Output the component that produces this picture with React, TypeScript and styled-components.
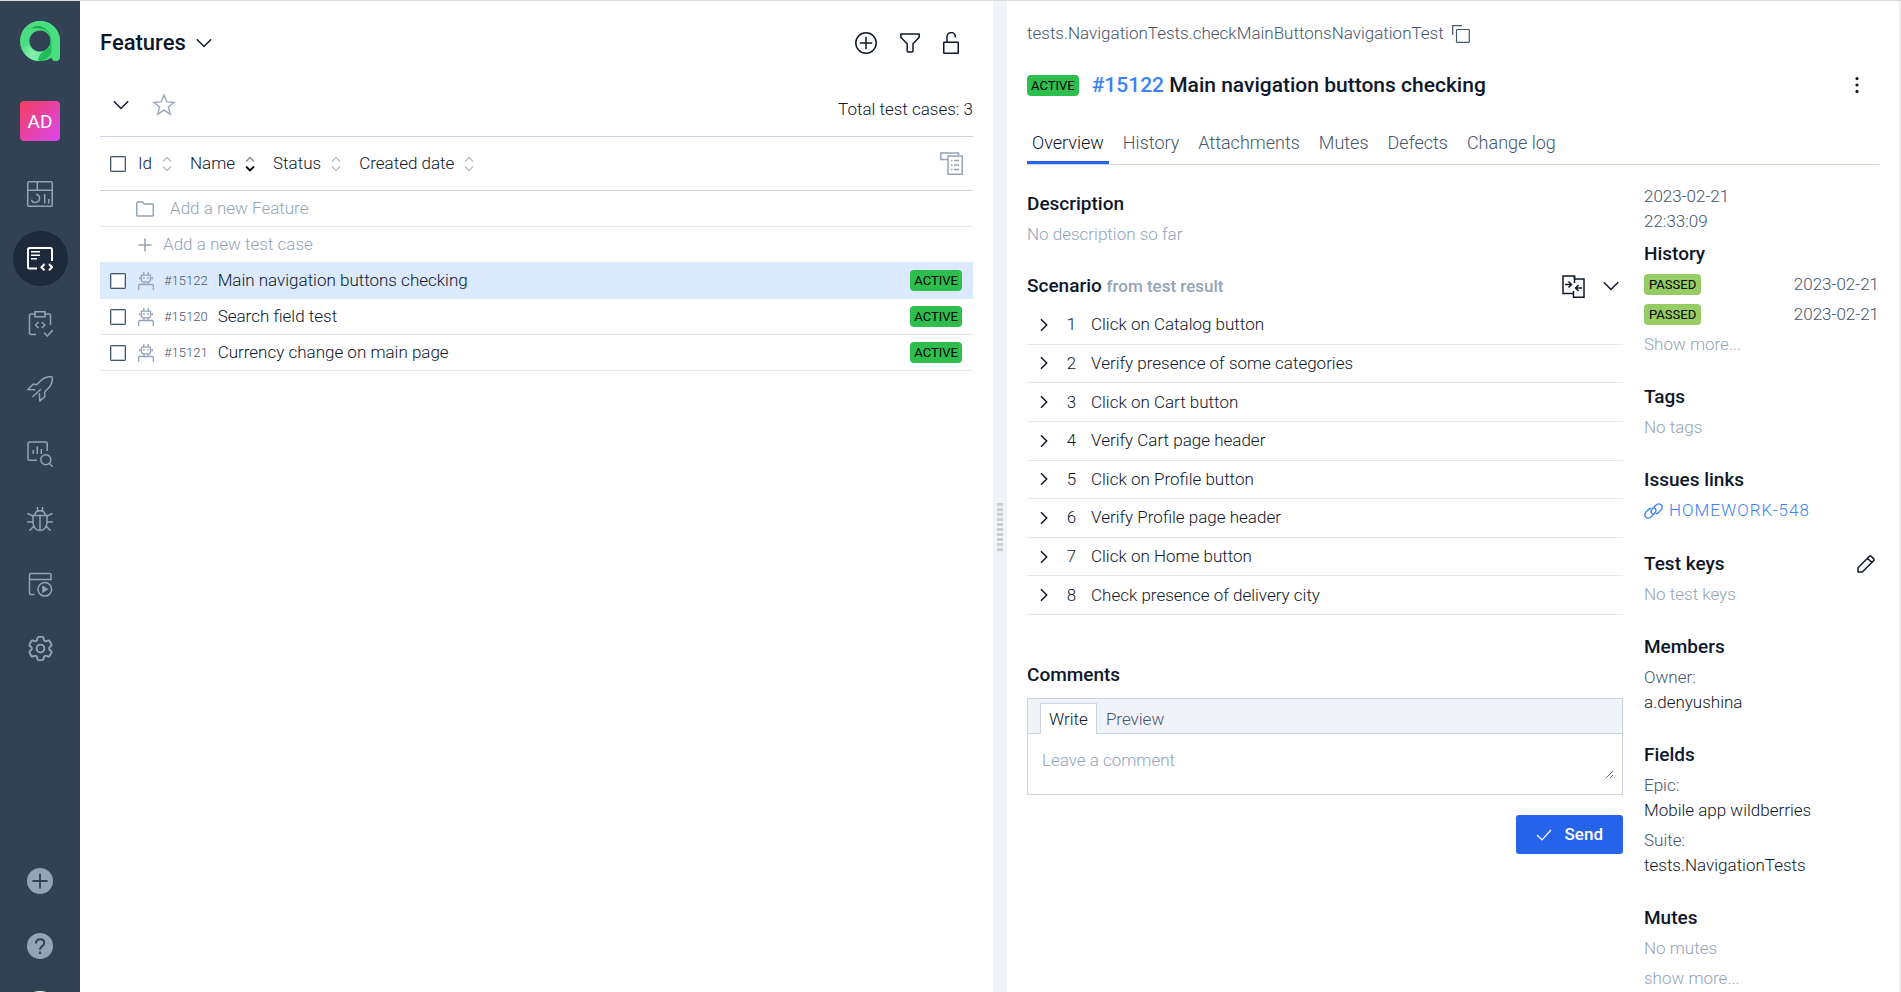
import React from "react";
import styled, { createGlobalStyle, css } from "styled-components";
import { HiOutlineCog6Tooth } from "react-icons/hi2";

const c = {
  ink: "#0f172a",
  text: "#1e293b",
  soft: "#475569",
  mute: "#94a3b8",
  line: "#cbd5e1",
  lineSoft: "#e2e8f0",
  blue: "#2563eb",
  link: "#3b82f6",
  panel: "#f0f4f9",
  picked: "#dbeafe",
};

const GlobalStyle = createGlobalStyle`
  *, *::before, *::after { box-sizing: border-box; }
  body {
    margin: 0;
    font: 300 17px/25px Roboto, "Liberation Sans", sans-serif;
    color: ${c.ink};
    background: #fff;
  }
  h1, h2, h3, p, ul, ol, dl, dd { margin: 0; padding: 0; }
  ul, ol { list-style: none; }
  button, input, textarea { font: inherit; color: inherit; }
  a { text-decoration: none; }
  svg { display: block; flex: none; }
`;

/* ---------- shell ---------- */

const Shell = styled.div`
  display: grid;
  grid-template-columns: 80px minmax(0, 913fr) 14px minmax(0, 894fr);
  height: 100vh;
  overflow: hidden;
  border-top: 1px solid #dcdcdc;
`;

const Sidebar = styled.aside`
  display: flex;
  flex-direction: column;
  align-items: center;
  min-height: 0;
  padding-top: 20px;
  background: #334155;
`;

const Avatar = styled.div`
  display: grid;
  place-items: center;
  width: 40px;
  height: 40px;
  margin: 40px 0 25px;
  border-radius: 4px;
  background: linear-gradient(135deg, #f43f5e, #d946ef);
  color: #fff;
  font-size: 19px;
  font-weight: 400;
`;

const NavList = styled.nav`
  display: flex;
  flex-direction: column;
  gap: 10px;
`;

const NavLink = styled.a<{ $active?: boolean }>`
  display: grid;
  flex: none;
  place-items: center;
  width: 55px;
  height: 55px;
  border-radius: 50%;
  color: ${(p) => (p.$active ? "#fff" : c.mute)};
  background: ${(p) => (p.$active ? "#1e293b" : "transparent")};
`;

const NavFooter = styled(NavList)`
  height: 139px;
  margin-top: auto;
  overflow: hidden;
`;

const UserDot = styled.span`
  width: 40px;
  height: 40px;
  border-radius: 50%;
  background: #fff;
`;

const Splitter = styled.div`
  display: grid;
  place-items: center;
  padding-top: 61px;
  background: ${c.panel};
`;

const Grip = styled.span`
  width: 6px;
  height: 48px;
  background: repeating-linear-gradient(#cfcfcf 0 3px, transparent 3px 5px);
`;

/* ---------- shared parts ---------- */

const IconButton = styled.button<{ $tone?: string }>`
  display: grid;
  place-items: center;
  padding: 0;
  border: 0;
  background: none;
  color: ${(p) => p.$tone ?? c.ink};
  cursor: pointer;
`;

const Badge = styled.span<{ $passed?: boolean }>`
  flex: none;
  height: 21px;
  padding: 0 ${(p) => (p.$passed ? 5 : 4)}px;
  border-radius: 4px;
  background: ${(p) => (p.$passed ? "#97cc64" : "#2dbe4e")};
  color: #000;
  font-size: 13px;
  font-weight: 400;
  line-height: 22px;
`;

const Checkbox = styled.input.attrs({ type: "checkbox" })`
  appearance: none;
  flex: none;
  width: 16px;
  height: 16px;
  margin: 0;
  border: 1px solid ${c.soft};
  outline: 1px solid #64748b66;
  outline-offset: -2px;
  border-radius: 1px;
  background: #fff;
`;

const Heading = styled.h2`
  font-size: 19px;
  font-weight: 500;
  line-height: 30px;
`;

const MutedText = styled.p`
  color: ${c.mute};
  line-height: 30px;
`;

/* ---------- test case list ---------- */

const ListPanel = styled.main`
  min-width: 0;
  padding: 0 20px;
`;

const ListHeader = styled.header`
  display: flex;
  align-items: center;
  justify-content: space-between;
  height: 83px;
`;

const TreePicker = styled.button`
  display: flex;
  align-items: center;
  gap: 10px;
  padding: 0;
  border: 0;
  background: none;
  color: ${c.ink};
  font-size: 22px;
  font-weight: 500;
`;

const Actions = styled.div<{ $gap: number; $right?: number }>`
  display: flex;
  align-items: center;
  gap: ${(p) => p.$gap}px;
  padding-right: ${(p) => p.$right ?? 0}px;
`;

const FilterBar = styled.div`
  display: flex;
  align-items: center;
  justify-content: space-between;
  height: 53px;
  padding-bottom: 2px;
  border-bottom: 1px solid ${c.line};
`;

const FilterTools = styled.div`
  display: flex;
  align-items: center;
  align-self: flex-start;
  gap: 23px;
  height: 42px;
  padding-left: 13px;
`;

const SortBar = styled.div`
  display: flex;
  align-items: center;
  height: 54px;
  padding: 0 10px;
  border-bottom: 1px solid ${c.line};
`;

const SortList = styled.div`
  display: flex;
  flex: 1;
  gap: 18px;
  margin-left: 12px;
`;

const SortButton = styled.button`
  display: flex;
  align-items: center;
  gap: 10px;
  padding: 0;
  border: 0;
  background: none;
  color: ${c.ink};
`;

const Rows = styled.ul``;

const rowBox = css`
  display: flex;
  align-items: center;
  height: 36px;
  padding: 0 11px 0 10px;
  border-bottom: 1px solid ${c.lineSoft};
`;

const AddRow = styled.li<{ $gap: number }>`
  ${rowBox}
  button {
    display: flex;
    align-items: center;
    gap: ${(p) => p.$gap}px;
    padding: 0 0 0 26px;
    border: 0;
    background: none;
    color: ${c.mute};
  }
`;

const CaseRow = styled.li<{ $picked?: boolean }>`
  ${rowBox}
  ${(p) =>
    p.$picked &&
    css`
      border-color: ${c.picked};
      background: ${c.picked};
      box-shadow: 0 -1px 0 ${c.picked};
    `}
`;

const CaseLabel = styled.label`
  display: flex;
  flex: 1;
  align-items: center;
  gap: 10px;
  min-width: 0;
`;

const BotMark = styled.span`
  margin-left: 2px;
  color: ${c.mute};
`;

const CaseId = styled.span`
  color: ${c.soft};
  font-size: 13px;
`;

/* ---------- details ---------- */

const Details = styled.section`
  min-width: 0;
  min-height: 0;
  overflow: hidden;
  padding: 16px 20px 0;
  border-right: 2px solid #f0f0f0;
`;

const FullName = styled.div`
  display: flex;
  align-items: center;
  gap: 8px;
  height: 33px;
  color: ${c.soft};
`;

const TitleBar = styled.header`
  display: flex;
  align-items: center;
  gap: 13px;
  height: 70px;
  padding-right: 14px;
`;

const Title = styled.h1`
  flex: 1;
  font-size: 21px;
  font-weight: 500;
  line-height: 30px;
  a { color: ${c.link}; }
`;

const TabBar = styled.nav`
  display: flex;
  gap: 9px;
  height: 45px;
  border-bottom: 1px solid ${c.line};
`;

const Tab = styled.a<{ $active?: boolean }>`
  height: 44px;
  padding: 0 5px;
  border-bottom: 3px solid ${(p) => (p.$active ? c.blue : "transparent")};
  color: ${(p) => (p.$active ? c.ink : c.soft)};
  font-size: 18px;
  line-height: 46px;
`;

const Columns = styled.div`
  display: grid;
  grid-template-columns: minmax(0, 1fr) 236px;
  gap: 20px;
`;

const MainColumn = styled.div`
  padding-top: 24px;
`;

const ScenarioHeader = styled.header`
  display: flex;
  align-items: center;
  justify-content: space-between;
  height: 40px;
  margin-top: 17px;
  small {
    color: ${c.mute};
    font-size: 17px;
  }
`;

const Steps = styled.ol`
  display: flex;
  flex-direction: column;
  height: 309px;
`;

const Step = styled.li`
  display: flex;
  flex: 1;
  align-items: center;
  padding-left: 9px;
  border-bottom: 1px solid ${c.lineSoft};
`;

const StepNumber = styled.span`
  width: 39px;
  text-align: center;
`;

const CommentsTitle = styled(Heading)`
  margin-top: 45px;
`;

const CommentBox = styled.div`
  margin-top: 8px;
  border: 1px solid ${c.line};
`;

const CommentTabs = styled.div`
  display: flex;
  align-items: flex-end;
  height: 35px;
  padding-left: 12px;
  border-bottom: 1px solid ${c.line};
  background: ${c.panel};
`;

const CommentTab = styled.button<{ $active?: boolean }>`
  height: 31px;
  margin-bottom: -1px;
  padding: 0 8px;
  border: 1px solid ${(p) => (p.$active ? c.line : "transparent")};
  border-bottom: 0;
  background: ${(p) => (p.$active ? "#fff" : "none")};
  color: ${(p) => (p.$active ? c.ink : c.soft)};
`;

const CommentField = styled.div`
  padding: 8px 8px 15px;
`;

const CommentInput = styled.textarea`
  display: block;
  width: 100%;
  height: 37px;
  padding: 6px;
  border: 0;
  outline: 0;
  resize: vertical;
  overflow: hidden;
  &::placeholder { color: ${c.mute}; }
`;

const SendButton = styled.button`
  display: flex;
  align-items: center;
  gap: 13px;
  height: 39px;
  margin: 20px 0 0 auto;
  padding: 0 20px;
  border: 0;
  border-radius: 3px;
  background: ${c.blue};
  color: #fff;
  font-weight: 500;
`;

const SideColumn = styled.aside`
  display: flex;
  flex-direction: column;
  gap: 23px;
  padding: 19px 0 20px 1px;
`;

const Stamp = styled.time`
  display: block;
  width: 120px;
  margin-bottom: 5px;
  color: ${c.soft};
`;

const SideHead = styled.header`
  display: flex;
  align-items: center;
  justify-content: space-between;
  padding-right: 4px;
`;

const HistoryRow = styled.div`
  display: flex;
  align-items: center;
  justify-content: space-between;
  height: 30px;
  color: ${c.soft};
`;

const MoreButton = styled.button`
  display: block;
  padding: 0;
  border: 0;
  background: none;
  color: ${c.mute};
  line-height: 30px;
`;

const IssueLink = styled.a`
  display: flex;
  align-items: center;
  gap: 6px;
  height: 31px;
  color: ${c.link};
  letter-spacing: 1px;
`;

const Field = styled.dl`
  padding: 3px 0 2px;
  dt { color: ${c.soft}; }
`;

/* ---------- icons ---------- */

type Draw = { w?: number; h?: number; sw?: number; children: React.ReactNode };
const Icon = ({ w = 26, h = w, sw = 1.5, children }: Draw) => (
  <svg width={w} height={h} viewBox={`0 0 ${w} ${h}`} fill="none" stroke="currentColor" strokeWidth={sw} aria-hidden="true">
    {children}
  </svg>
);

const Logo = () => (
  <svg width="40" height="40" viewBox="0 0 40 40" aria-label="Allure">
    <defs>
      <linearGradient id="lgTail" x1="0" y1="0.3" x2="1" y2="0.6">
        <stop offset="0" stopColor="#4ade80" />
        <stop offset="0.5" stopColor="#86efac" />
        <stop offset="1" stopColor="#6ee795" />
      </linearGradient>
      <linearGradient id="lgInner" x1="0" y1="0" x2="1" y2="1">
        <stop offset="0" stopColor="#17984a" />
        <stop offset="0.5" stopColor="#22c55e" />
        <stop offset="1" stopColor="#1fb155" />
      </linearGradient>
    </defs>
    <circle cx="20" cy="20" r="15.300" fill="none" stroke="#4ade80" strokeWidth="9.400" />
    <path d="M11 7.500C20 1 33.500 6 34.500 20c0 8-3.500 14.500-10 19.500-8 1.500-11 0-12-1 4-1 6-3.500 8-7.800A10.700 10.700 0 0 0 30.700 20c0-8-5-14.500-19.700-12.500z" fill="url(#lgInner)" />
    <path d="M20 0c11 0 20 9 20 20v16a4 4 0 0 1-8.500 0V20c0-8-5-14-13-15.500-4-.5-7.500.8-10.500 3.500C10 3 15 0 20 0z" fill="#4ade80" />
    <path d="M.5 24C3 34 10 40 20 40c-3-1-2-5 3.500-9.800-5.500 2.300-12 0-14-6.200-3 1.500-6.500 1.500-9 0z" fill="url(#lgTail)" />
  </svg>
);

const Dashboard = () => (
  <Icon>
    <rect x=".75" y=".75" width="24.5" height="24.500" rx="1" />
    <path d="M1 9.300h24M10.300 1v8M17.700 13v9.500M21.700 18v4.500M9 13.200a4.200 4.200 0 1 1-4.600 5.600" />
  </Icon>
);
const TestCases = () => (
  <Icon sw={2}>
    <path d="M25 15V3.500A1.500 1.500 0 0 0 23.500 2h-21A1.500 1.500 0 0 0 1 3.500v17.500A1.500 1.500 0 0 0 2.500 22.500H10" />
    <path d="M4 5.800h9M4 9.200h9M4 12.800h6" strokeWidth="1.500" />
    <path d="M17.500 18l-3 3.200 3 3.200M22 18l3 3.200-3 3.200" />
  </Icon>
);
const Clipboard = () => (
  <Icon>
    <path d="M8 3H4a1.500 1.500 0 0 0-1.500 1.500v17.500A1.500 1.500 0 0 0 4 23.500h5M18 3h4a1.500 1.500 0 0 1 1.500 1.500V14M8 .8h10v5H8z" />
    <path d="M11.500 11L8.500 14l3 3M14.800 11l3 3-3 3M17 21.500l3.300 3.500 5.500-6" />
  </Icon>
);
const Rocket = () => (
  <Icon>
    <path d="M25.200.8C20.500.2 16.500 2 13.500 5L10 8.600 6 8.300.8 13.500l7.500.3M25.200.8c.6 4.700-1.200 8.700-4.200 11.700L17.700 16l.2 4.500-5 4.500-.6-7.700M14 13l-8.500 8" strokeLinejoin="round" />
  </Icon>
);
const Report = () => (
  <Icon>
    <path d="M20.200 10V2.500A1.500 1.500 0 0 0 18.700 1H2.500A1.500 1.500 0 0 0 1 2.500v15.500A1.500 1.500 0 0 0 2.500 19.300H10M6.300 9v4M10.300 5.500V13M14.300 8v5" />
    <circle cx="18.800" cy="18.800" r="5" />
    <path d="M22.500 22.500l3.300 3.300" />
  </Icon>
);
const Bug = () => (
  <Icon>
    <path d="M6 9.500h14v6.500c0 5-3 8.500-7 8.500s-7-3.500-7-8.500zM13 9.500v15M7.500 9.500C8 6.500 10 4.800 13 4.800s5 1.700 5.500 4.700M10.500 5V1M15.500 5V1M6 10L.5 7.500M20 10l5.500-2.500M6 16H.2M20 16h5.800M7 20l-4.500 4.800M19 20l4.500 4.800" />
  </Icon>
);
const Launches = () => (
  <Icon>
    <path d="M24 7.500V3.500A1 1 0 0 0 23 2.500H4A1.500 1.500 0 0 0 2.500 4v18A1.500 1.500 0 0 0 4 23.500h3.500M2.500 8.500H24v-2" />
    <circle cx="17.800" cy="18.300" r="6.800" />
    <path d="M16 15.700v5.200l4-2.600z" fill="currentColor" />
  </Icon>
);
const PlusDisc = () => (
  <svg width="26" height="26" viewBox="0 0 26 26" aria-hidden="true">
    <circle cx="13" cy="13" r="13" fill={c.mute} />
    <path d="M13 5.500v15M5.500 13h15" stroke="#334155" strokeWidth="1.800" />
  </svg>
);
const HelpDisc = () => (
  <svg width="26" height="26" viewBox="0 0 26 26" fill="none" aria-hidden="true">
    <circle cx="13" cy="13" r="13" fill={c.mute} />
    <path d="M8.800 10.500c0-2.600 1.800-4.200 4.300-4.200s4.200 1.500 4.200 3.700c0 3-4.200 3.200-4.200 6.300v.4M13.100 18.500v2.600" stroke="#334155" strokeWidth="2" />
  </svg>
);

const ChevronDown = () => (
  <Icon w={16} h={10}>
    <path d="M.8 1.300L8 8.500l7.200-7.200" />
  </Icon>
);
const ChevronRight = () => (
  <Icon w={16}>
    <path d="M5 2.200l5.700 5.800L5 13.800" />
  </Icon>
);
const Star = () => (
  <Icon w={24} sw={1.3}>
    <path d="M12 2l2.700 6.900 7.400.4-5.800 4.600 2 7.300-6.300-4.100-6.300 4.100 2-7.300L1.900 9.300l7.400-.4z" />
  </Icon>
);
const PlusCircle = () => (
  <Icon w={22}>
    <circle cx="11" cy="11" r="10.200" />
    <path d="M11 4.700v12.600M4.700 11h12.600" />
  </Icon>
);
const Funnel = () => (
  <Icon w={20}>
    <path d="M.8 1h18.400v3.200L13 10.800v7.500l-.8.700H8l-.8-.7v-7.500L.8 4.200z" strokeLinejoin="round" />
  </Icon>
);
const Unlock = () => (
  <Icon w={16} h={22}>
    <rect x=".75" y="10.300" width="14.500" height="10.900" rx=".5" />
    <path d="M4 10.300V5.200A4.200 4.200 0 0 1 12.300 4v1.500" />
  </Icon>
);
const ColumnsIcon = () => (
  <Icon w={23}>
    <path d="M7.500 7.500H.8V1h17.700v2.500" />
    <path d="M8 4h14.200v18.200H8zM11 8.500h1.500M14 8.500h5M11 13h1.500M14 13h5M11 17.500h1.500M14 17.500h5" />
  </Icon>
);
const Sorter = ({ down }: { down?: boolean }) => (
  <svg width="10" height="16" viewBox="0 0 10 16" fill="none" strokeWidth="1.400" aria-hidden="true">
    <path d="M1 5.500l4-4 4 4" stroke={down ? "#8b8b8b" : "#bdbdbd"} />
    <path d="M1 10.500l4 4 4-4" stroke={down ? "#000" : "#bdbdbd"} strokeWidth={down ? 1.8 : 1.4} />
  </svg>
);
const Folder = () => (
  <Icon w={18} h={16}>
    <path d="M.8 14.500V1.800L1.500 1h5L8.300 3h8.300l.7.700v10.800l-.7.500H1.500z" />
  </Icon>
);
const Plus = () => (
  <Icon w={18} h={16}>
    <path d="M9 1.500v13M2.500 8h13" />
  </Icon>
);
const Robot = () => (
  <Icon w={16} h={18} sw={1.3}>
    <path d="M5.800 0v3M10.200 0v3M3.500 3.200h9v5.500l-1.300 1.200H4.800L3.500 8.700zM1.800 5v2.500M14.200 5v2.500M.7 18v-4.800l.7-.7h13.200l.7.700V18M6 10v2.500M10 10v2.500" />
    <path d="M6 5v1.800M10 5v1.800" />
  </Icon>
);
const Copy = () => (
  <Icon w={18} sw={1.2}>
    <path d="M.7 10V.7H10" />
    <rect x="4.500" y="4.500" width="12.800" height="12.800" rx=".5" />
  </Icon>
);
const Dots = () => (
  <svg width="16" height="16" viewBox="0 0 16 16" fill="currentColor" aria-hidden="true">
    <circle cx="8" cy="1.600" r="1.600" />
    <circle cx="8" cy="8" r="1.600" />
    <circle cx="8" cy="14.400" r="1.600" />
  </svg>
);
const Compare = () => (
  <Icon w={23}>
    <path d="M12.500 4V1H1v17.500h10.500" />
    <path d="M12.500 8V4H22v18.200H11.500V16M12.500 1v7M3 9.500h6.500M6.500 6.500l3 3-3 3M20 13h-6.500M16.500 10l-3 3 3 3" />
  </Icon>
);
const Check = () => (
  <Icon w={16} h={12} sw={1.2}>
    <path d="M1 6l5 5 9-10" />
  </Icon>
);
const Chain = () => (
  <Icon w={19} h={16} sw={1.4}>
    <path d="M8.800 11.200C6.800 10.300 6.500 8 8 6.300l3-3.300c1.700-1.900 4.200-2.600 6-1.300 1.700 1.300 1.500 3.500 0 5.200l-2.200 2.400c-.8.900-1.800 1.400-2.800 1.500" />
    <path d="M10.200 4.800c2 .9 2.300 3.200.8 4.900l-3 3.300c-1.700 1.900-4.200 2.600-6 1.300C.3 13 .5 10.800 2 9.100l2.200-2.400C5 5.800 6 5.300 7 5.200" />
  </Icon>
);
const Pencil = () => (
  <Icon w={18}>
    <path d="M1 17v-4.300L12.700 1h1.200L17 4.100v1.200L5.300 17zM10.500 3.200l4.300 4.300" strokeLinejoin="round" />
  </Icon>
);

/* ---------- data ---------- */

const nav = [
  { label: "Dashboards", icon: <Dashboard /> },
  { label: "Test cases", icon: <TestCases />, active: true },
  { label: "Test plans", icon: <Clipboard /> },
  { label: "Launches", icon: <Rocket /> },
  { label: "Analytics", icon: <Report /> },
  { label: "Defects", icon: <Bug /> },
  { label: "Jobs", icon: <Launches /> },
  { label: "Settings", icon: <HiOutlineCog6Tooth size={31} /> },
];
const sorts = ["Id", "Name", "Status", "Created date"];
const cases = [
  { id: "#15122", name: "Main navigation buttons checking", picked: true },
  { id: "#15120", name: "Search field test" },
  { id: "#15121", name: "Currency change on main page" },
];
const tabs = ["Overview", "History", "Attachments", "Mutes", "Defects", "Change log"];
const steps = [
  "Click on Catalog button",
  "Verify presence of some categories",
  "Click on Cart button",
  "Verify Cart page header",
  "Click on Profile button",
  "Verify Profile page header",
  "Click on Home button",
  "Check presence of delivery city",
];

/* ---------- page ---------- */

const SideNav = () => (
  <Sidebar>
    <Logo />
    <Avatar>AD</Avatar>
    <NavList aria-label="Project">
      {nav.map((n) => (
        <NavLink key={n.label} href="#" aria-label={n.label} $active={n.active}>
          {n.icon}
        </NavLink>
      ))}
    </NavList>
    <NavFooter aria-label="Account">
      <NavLink href="#" aria-label="Create"><PlusDisc /></NavLink>
      <NavLink href="#" aria-label="Help"><HelpDisc /></NavLink>
      <NavLink href="#" aria-label="Profile"><UserDot /></NavLink>
    </NavFooter>
  </Sidebar>
);

const CaseList = () => (
  <ListPanel>
    <ListHeader>
      <TreePicker>Features <ChevronDown /></TreePicker>
      <Actions $gap={23} $right={14}>
        <IconButton aria-label="Create"><PlusCircle /></IconButton>
        <IconButton aria-label="Filter"><Funnel /></IconButton>
        <IconButton aria-label="Unlock"><Unlock /></IconButton>
      </Actions>
    </ListHeader>
    <FilterBar>
      <FilterTools>
        <IconButton aria-label="Expand"><ChevronDown /></IconButton>
        <IconButton aria-label="Favourites" $tone={c.mute}><Star /></IconButton>
      </FilterTools>
      <p>Total test cases: 3</p>
    </FilterBar>
    <SortBar>
      <Checkbox aria-label="Select all" />
      <SortList>
        {sorts.map((s) => (
          <SortButton key={s}>{s} <Sorter down={s === "Name"} /></SortButton>
        ))}
      </SortList>
      <IconButton aria-label="Columns" $tone={c.mute}><ColumnsIcon /></IconButton>
    </SortBar>
    <Rows>
      <AddRow $gap={16}><button><Folder />Add a new Feature</button></AddRow>
      <AddRow $gap={9}><button><Plus />Add a new test case</button></AddRow>
      {cases.map((t) => (
        <CaseRow key={t.id} $picked={t.picked}>
          <CaseLabel>
            <Checkbox />
            <BotMark><Robot /></BotMark>
            <CaseId>{t.id}</CaseId>
            <span>{t.name}</span>
          </CaseLabel>
          <Badge>ACTIVE</Badge>
        </CaseRow>
      ))}
    </Rows>
  </ListPanel>
);

const Overview = () => (
  <MainColumn>
    <Heading>Description</Heading>
    <MutedText>No description so far</MutedText>
    <ScenarioHeader>
      <Heading>Scenario <small>from test result</small></Heading>
      <Actions $gap={18} $right={4}>
        <IconButton aria-label="Compare"><Compare /></IconButton>
        <IconButton aria-label="Collapse"><ChevronDown /></IconButton>
      </Actions>
    </ScenarioHeader>
    <Steps>
      {steps.map((s, i) => (
        <Step key={s}>
          <IconButton aria-label={`Expand step ${i + 1}`}><ChevronRight /></IconButton>
          <StepNumber>{i + 1}</StepNumber>
          <span>{s}</span>
        </Step>
      ))}
    </Steps>
    <CommentsTitle>Comments</CommentsTitle>
    <CommentBox>
      <CommentTabs>
        <CommentTab $active>Write</CommentTab>
        <CommentTab>Preview</CommentTab>
      </CommentTabs>
      <CommentField>
        <CommentInput aria-label="Comment" placeholder="Leave a comment" />
      </CommentField>
    </CommentBox>
    <SendButton><Check />Send</SendButton>
  </MainColumn>
);

const Facts = () => (
  <SideColumn>
    <section>
      <Stamp>2023-02-21 22:33:09</Stamp>
      <Heading>History</Heading>
      <HistoryRow><Badge $passed>PASSED</Badge>2023-02-21</HistoryRow>
      <HistoryRow><Badge $passed>PASSED</Badge>2023-02-21</HistoryRow>
      <MoreButton>Show more...</MoreButton>
    </section>
    <section>
      <Heading>Tags</Heading>
      <MutedText>No tags</MutedText>
    </section>
    <section>
      <Heading>Issues links</Heading>
      <IssueLink href="#"><Chain />HOMEWORK-548</IssueLink>
    </section>
    <section>
      <SideHead>
        <Heading>Test keys</Heading>
        <IconButton aria-label="Edit test keys"><Pencil /></IconButton>
      </SideHead>
      <MutedText>No test keys</MutedText>
    </section>
    <section>
      <Heading>Members</Heading>
      <Field><dt>Owner:</dt><dd>a.denyushina</dd></Field>
    </section>
    <section>
      <Heading>Fields</Heading>
      <Field><dt>Epic:</dt><dd>Mobile app wildberries</dd></Field>
      <Field><dt>Suite:</dt><dd>tests.NavigationTests</dd></Field>
    </section>
    <section>
      <Heading>Mutes</Heading>
      <MutedText>No mutes</MutedText>
      <MoreButton>show more...</MoreButton>
    </section>
  </SideColumn>
);

export default function App() {
  return (
    <>
      <GlobalStyle />
      <Shell>
        <SideNav />
        <CaseList />
        <Splitter><Grip /></Splitter>
        <Details>
          <FullName>
            tests.NavigationTests.checkMainButtonsNavigationTest
            <IconButton aria-label="Copy" $tone={c.soft}><Copy /></IconButton>
          </FullName>
          <TitleBar>
            <Badge>ACTIVE</Badge>
            <Title><a href="#">#15122</a> Main navigation buttons checking</Title>
            <IconButton aria-label="More"><Dots /></IconButton>
          </TitleBar>
          <TabBar>
            {tabs.map((t, i) => (
              <Tab key={t} href="#" $active={i === 0}>{t}</Tab>
            ))}
          </TabBar>
          <Columns>
            <Overview />
            <Facts />
          </Columns>
        </Details>
      </Shell>
    </>
  );
}
